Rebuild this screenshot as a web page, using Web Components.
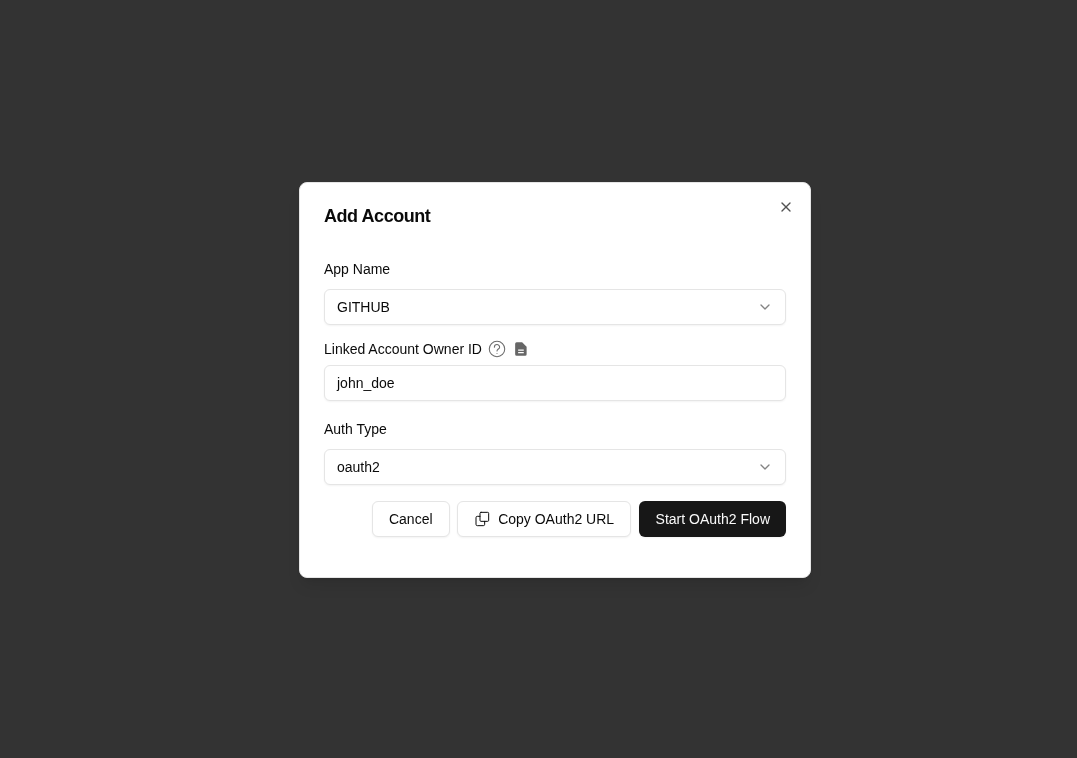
<!DOCTYPE html>
<html>
<head>
<meta charset="utf-8">
<title>Add Account</title>
<style>
    html, body { margin: 0; height: 100%; }
    body { font-family: 'Liberation Sans', Arial, sans-serif; color: #0a0a0a; }
</style>
</head>
<body>

<modal-overlay>
    <add-account-dialog>
        <span slot="title">Add Account</span>

        <form-field label="App Name" style="--label-gap: 12px">
            <select-box value="GITHUB"></select-box>
        </form-field>

        <form-field label="Linked Account Owner ID" help style="--field-gap: 20px">
            <text-box value="john_doe"></text-box>
        </form-field>

        <form-field label="Auth Type" style="--label-gap: 12px; --field-gap: 0">
            <select-box value="oauth2"></select-box>
        </form-field>

        <ui-button slot="actions">Cancel</ui-button>
        <ui-button slot="actions" icon="copy">Copy OAuth2 URL</ui-button>
        <ui-button slot="actions" variant="primary">Start OAuth2 Flow</ui-button>
    </add-account-dialog>
</modal-overlay>

<script>
class ModalOverlay extends HTMLElement {
    constructor() {
        super();
        this.root = this.attachShadow({ mode: 'open' });
        this.root.innerHTML = `
            <style>
                :host {
                    display: flex;
                    align-items: center;
                    justify-content: center;
                    box-sizing: border-box;
                    height: 758px;
                    padding: 2px 0 0 33px;
                    background: #333333;
                }
            </style>
            <slot></slot>
        `;
    }
}

class AddAccountDialog extends HTMLElement {
    constructor() {
        super();
        this.root = this.attachShadow({ mode: 'open' });
        this.root.innerHTML = `
            <style>
                :host {
                    display: block;
                    position: relative;
                    box-sizing: border-box;
                    width: 512px;
                    height: 396px;
                    padding: 24px;
                    background: #fff;
                    border: 1px solid #e5e5e5;
                    border-radius: 8px;
                    box-shadow: 0 10px 15px -3px rgba(0,0,0,.1), 0 4px 6px -4px rgba(0,0,0,.1);
                    /* own layer, text gets the same grey antialiasing as the original */
                    will-change: transform;
                }
                h2 {
                    margin: 0 0 36px;
                    font-size: 18px;
                    line-height: 18px;
                    font-weight: 700;
                    letter-spacing: -0.45px;
                }
                .fields {
                    display: flex;
                    flex-direction: column;
                }
                .actions {
                    display: flex;
                    justify-content: flex-end;
                    gap: 8px;
                    margin-top: 16px;
                }
                button {
                    position: absolute;
                    top: 16px;
                    right: 16px;
                    display: flex;
                    padding: 0;
                    border: 0;
                    background: none;
                    color: #0a0a0a;
                    opacity: .7;
                }
            </style>
            <h2><slot name="title"></slot></h2>
            <div class="fields"><slot></slot></div>
            <div class="actions"><slot name="actions"></slot></div>
            <button aria-label="Close">
                <svg width="16" height="16" viewBox="0 0 24 24" fill="none" stroke="currentColor" stroke-width="2" stroke-linecap="round" stroke-linejoin="round">
                    <path d="M18 6 6 18"/><path d="m6 6 12 12"/>
                </svg>
            </button>
        `;
    }
}

class FormField extends HTMLElement {
    constructor() {
        super();
        this.root = this.attachShadow({ mode: 'open' });
    }

    connectedCallback() {
        const help = this.hasAttribute('help') ? `
            <svg class="q" width="18" height="18" viewBox="0 0 24 24" fill="none" stroke="currentColor" stroke-width="1.4" stroke-linecap="round" stroke-linejoin="round">
                <circle cx="12" cy="12" r="10.3"/>
                <path d="M8.500 9.500a3.500 3.500 0 0 1 7 0c0 2.300-3.500 2.800-3.500 5.200"/>
                <path d="M12 18h.01"/>
            </svg>
            <svg class="doc" width="18" height="18" viewBox="0 0 24 24" fill="#666">
                <path fill-rule="evenodd" d="M6.200 3h7.300L19.500 9v10a2 2 0 0 1-2 2H6.200a2 2 0 0 1-2-2V5a2 2 0 0 1 2-2Zm2 9.500v1.700h7.500v-1.700H8.200Zm0 3.600v1.700h7.500v-1.700H8.200Z"/>
            </svg>` : '';
        this.root.innerHTML = `
            <style>
                :host {
                    display: block;
                    margin-bottom: var(--field-gap, 16px);
                }
                label {
                    display: flex;
                    align-items: center;
                    height: 16px;
                    margin-bottom: var(--label-gap, 8px);
                    font-size: 14px;
                    line-height: 16px;
                    color: #0a0a0a;
                }
                .q { margin-left: 6px; color: #6b6b6b; }
                .doc { margin-left: 6px; }
            </style>
            <label>${this.getAttribute('label')}${help}</label>
            <slot></slot>
        `;
    }
}

class SelectBox extends HTMLElement {
    constructor() {
        super();
        this.root = this.attachShadow({ mode: 'open' });
    }

    connectedCallback() {
        this.root.innerHTML = `
            <style>
                :host {
                    display: flex;
                    align-items: center;
                    justify-content: space-between;
                    box-sizing: border-box;
                    height: 36px;
                    padding: 0 12px;
                    border: 1px solid #e5e5e5;
                    border-radius: 6px;
                    background: #fff;
                    box-shadow: 0 1px 2px rgba(0,0,0,.05);
                    font-size: 14px;
                }
                svg { color: #0a0a0a; opacity: .5; }
            </style>
            <span>${this.getAttribute('value')}</span>
            <svg width="16" height="16" viewBox="0 0 24 24" fill="none" stroke="currentColor" stroke-width="2" stroke-linecap="round" stroke-linejoin="round">
                <path d="m6 9 6 6 6-6"/>
            </svg>
        `;
    }
}

class TextBox extends HTMLElement {
    constructor() {
        super();
        this.root = this.attachShadow({ mode: 'open' });
    }

    connectedCallback() {
        this.root.innerHTML = `
            <style>
                :host {
                    display: flex;
                    align-items: center;
                    box-sizing: border-box;
                    height: 36px;
                    padding: 0 12px;
                    border: 1px solid #e5e5e5;
                    border-radius: 6px;
                    background: #fff;
                    box-shadow: 0 1px 2px rgba(0,0,0,.05);
                    font-size: 14px;
                }
            </style>
            <span>${this.getAttribute('value')}</span>
        `;
    }
}

class UiButton extends HTMLElement {
    constructor() {
        super();
        this.root = this.attachShadow({ mode: 'open' });
    }

    connectedCallback() {
        const icon = this.getAttribute('icon') === 'copy' ? `
            <svg width="16" height="16" viewBox="0 0 24 24" fill="none" stroke="currentColor" stroke-width="1.5" stroke-linecap="round" stroke-linejoin="round">
                <rect x="9" y="2" width="13" height="13.500" rx="1.500"/>
                <path d="M9 8H5a2 2 0 0 0-2 2v10a2 2 0 0 0 2 2h9a2 2 0 0 0 2-2v-4.500"/>
            </svg>` : '';
        this.root.innerHTML = `
            <style>
                :host {
                    display: inline-flex;
                    align-items: center;
                    gap: 8px;
                    box-sizing: border-box;
                    height: 36px;
                    padding: 0 16px;
                    border: 1px solid #e5e5e5;
                    border-radius: 6px;
                    background: #fff;
                    color: #0a0a0a;
                    box-shadow: 0 1px 2px rgba(0,0,0,.05);
                    font-size: 14px;
                    white-space: nowrap;
                }
                :host([icon]) { margin-left: -0.4px; }
                :host([variant="primary"]) {
                    padding: 0 16px 0 16.5px;
                    background: #171717;
                    border: 0;
                    color: #fafafa;
                }
            </style>
            ${icon}<slot></slot>
        `;
    }
}

customElements.define('modal-overlay', ModalOverlay);
customElements.define('add-account-dialog', AddAccountDialog);
customElements.define('form-field', FormField);
customElements.define('select-box', SelectBox);
customElements.define('text-box', TextBox);
customElements.define('ui-button', UiButton);
</script>
</body>
</html>
